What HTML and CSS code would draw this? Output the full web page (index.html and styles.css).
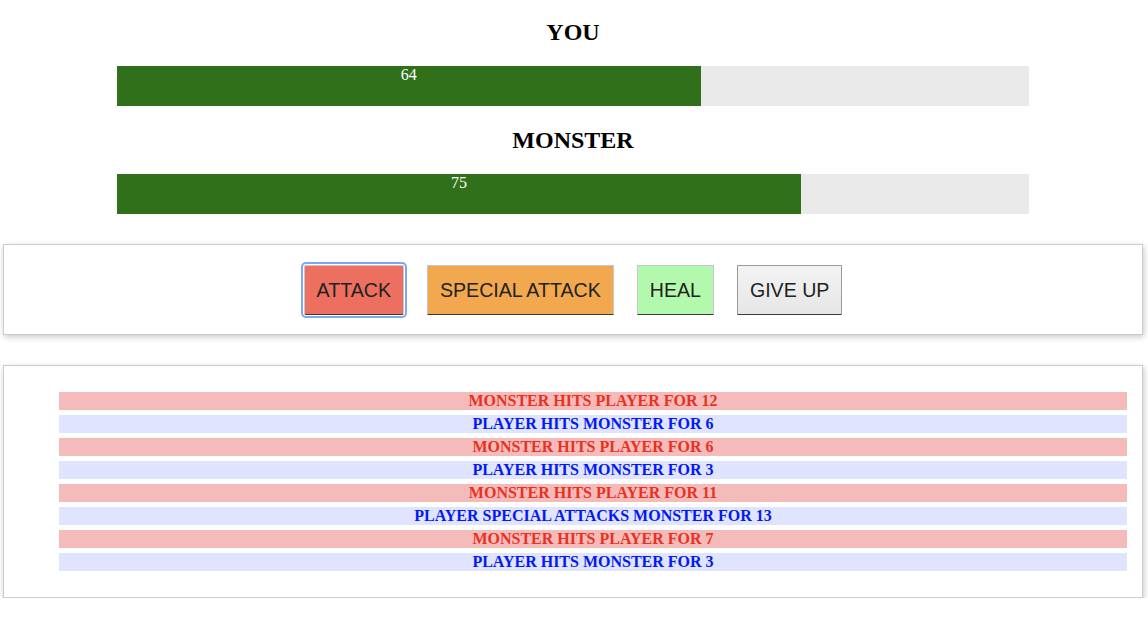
FILE: index.html
```html
<!DOCTYPE html>
<html lang="en">
<head>
<meta charset="utf-8">
<title>Monster Slayer</title>
<link rel="stylesheet" href="styles.css">
</head>
<body>
<header class="health">
  <section class="combatant">
    <h2 class="combatant-title">YOU</h2>
    <div class="healthbar">
      <div class="healthbar-value" style="width: 64%">64</div>
    </div>
  </section>
  <section class="combatant">
    <h2 class="combatant-title">MONSTER</h2>
    <div class="healthbar">
      <div class="healthbar-value" style="width: 75%">75</div>
    </div>
  </section>
</header>
<section class="card controls">
  <button class="btn btn-attack is-focused">ATTACK</button>
  <button class="btn btn-special">SPECIAL ATTACK</button>
  <button class="btn btn-heal">HEAL</button>
  <button class="btn btn-giveup">GIVE UP</button>
</section>
<section class="card log">
  <ul class="log-list">
    <li class="log-item log-monster">MONSTER HITS PLAYER FOR 12</li>
    <li class="log-item log-player">PLAYER HITS MONSTER FOR 6</li>
    <li class="log-item log-monster">MONSTER HITS PLAYER FOR 6</li>
    <li class="log-item log-player">PLAYER HITS MONSTER FOR 3</li>
    <li class="log-item log-monster">MONSTER HITS PLAYER FOR 11</li>
    <li class="log-item log-player">PLAYER SPECIAL ATTACKS MONSTER FOR 13</li>
    <li class="log-item log-monster">MONSTER HITS PLAYER FOR 7</li>
    <li class="log-item log-player">PLAYER HITS MONSTER FOR 3</li>
  </ul>
</section>
</body>
</html>
```

FILE: styles.css
```css
html, body {
  margin: 0;
  padding: 0;
  background: #ffffff;
}

body {
  font-family: "Liberation Serif", "Times New Roman", serif;
  padding: 0 5px 0 3px;
}

.health {
  display: block;
}

.combatant {
  display: block;
}

.combatant + .combatant {
  padding-top: 2px;
}

.combatant-title {
  margin: 18px 0 20px;
  font-size: 24px;
  line-height: 28px;
  font-weight: bold;
  text-align: center;
  color: #000;
}

.healthbar {
  width: 80%;
  height: 40px;
  margin: 0 auto;
  background: #eaeaea;
}

.healthbar-value {
  height: 100%;
  background: #30701a;
  color: #ffffff;
  font-size: 16px;
  line-height: 18px;
  text-align: center;
}

.card {
  border: 1px solid #cccccc;
  box-shadow: 1px 2px 6px rgba(0, 0, 0, 0.22);
  background: #ffffff;
}

.controls {
  margin-top: 30px;
  padding: 20px 0 19px;
  display: flex;
  justify-content: center;
  gap: 23px;
}

.btn {
  font-family: "Liberation Sans", Arial, Helvetica, sans-serif;
  font-size: 19.6px;
  line-height: 24px;
  padding: 12px 12px;
  color: #222;
  border: 1px solid #c7c7c7;
  border-bottom-color: #3a3a3a;
  border-radius: 1px;
  cursor: pointer;
}

.btn-attack {
  background: #ec6f5f;
}

.btn-special {
  background: #f2a84e;
}

.btn-heal {
  background: #b2f9ad;
}

.btn-giveup {
  background: linear-gradient(#f3f3f3, #e6e6e6);
  border-color: #9a9a9a;
  border-bottom-color: #3a3a3a;
}

.is-focused {
  box-shadow: 0 0 0 1px #ffffff, 0 0 0 3px #7ea6f4;
  border-radius: 2px;
}

.log {
  margin-top: 30px;
  padding: 26px 15px 26px;
}

.log-list {
  list-style: none;
  margin: 0;
  padding: 0 0 0 40px;
  display: flex;
  flex-direction: column;
  gap: 5px;
}

.log-item {
  height: 18px;
  font-size: 16px;
  line-height: 18px;
  font-weight: bold;
  text-align: center;
}

.log-monster {
  background: #f5bbbb;
  color: #e8321e;
}

.log-player {
  background: #e0e4fe;
  color: #0019f5;
}
```
